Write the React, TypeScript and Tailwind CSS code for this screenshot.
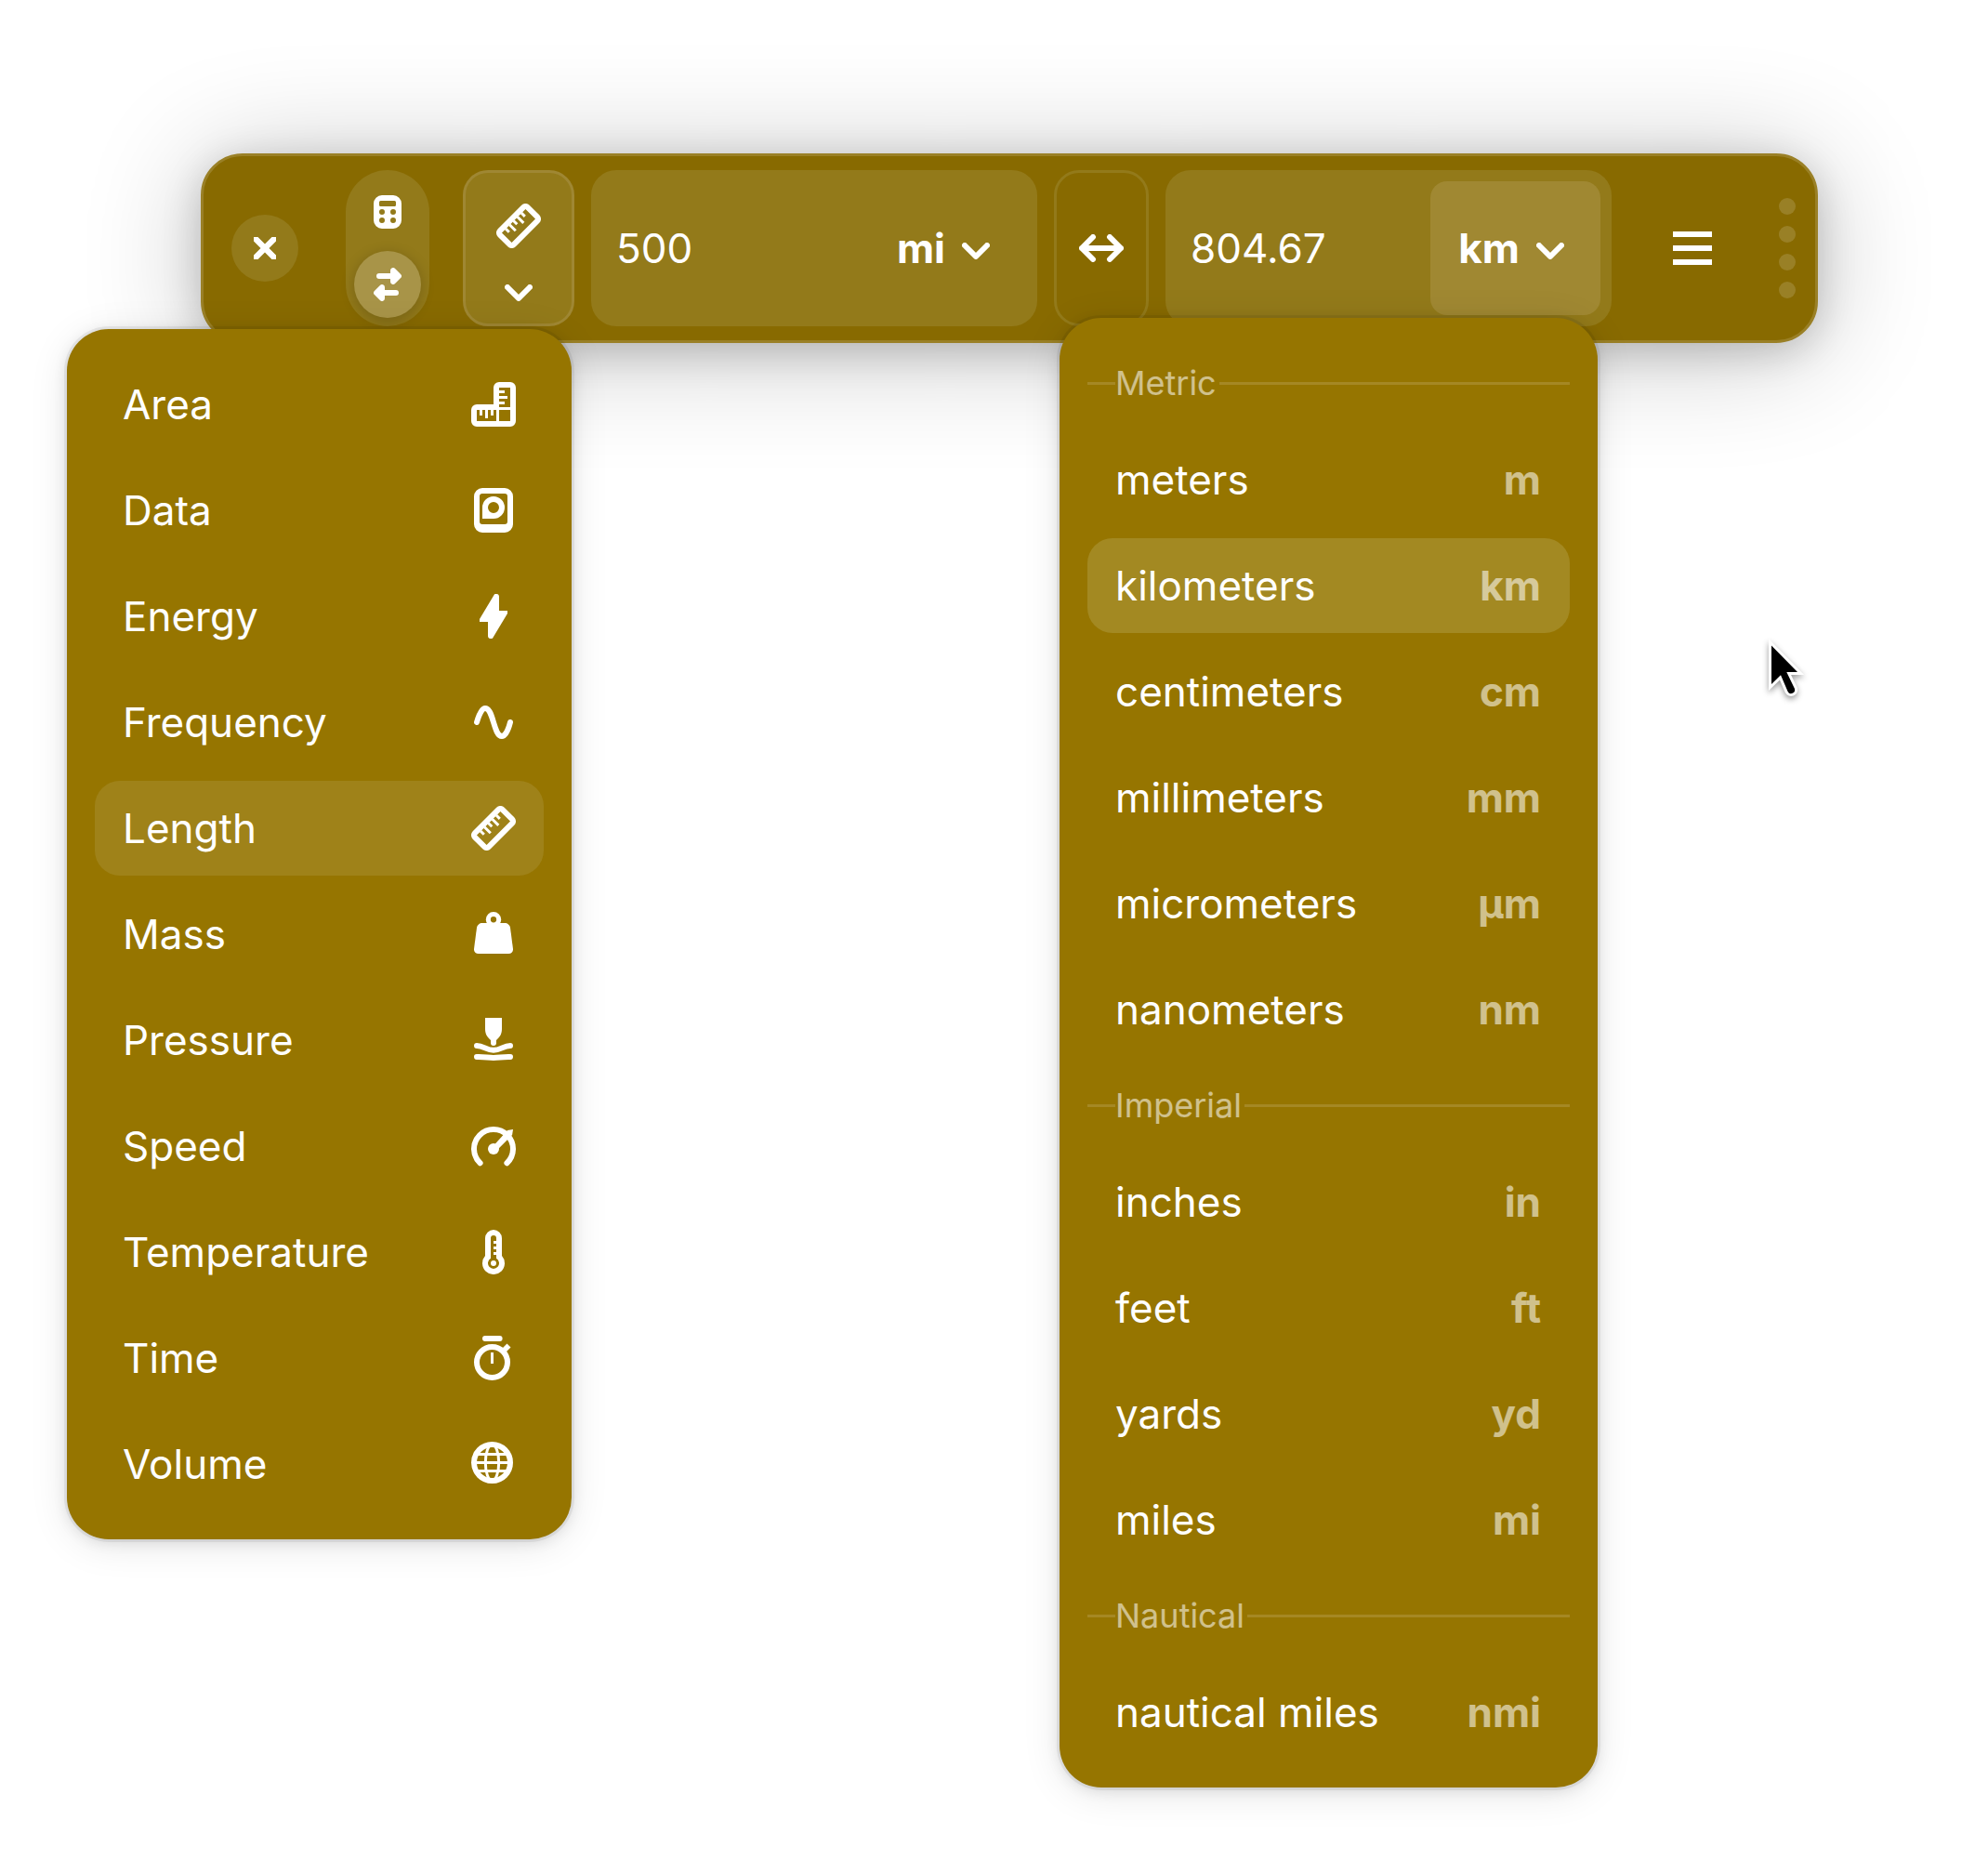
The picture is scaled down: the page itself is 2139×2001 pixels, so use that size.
import type { ReactNode } from 'react';

type IconProps = { children: ReactNode; w?: number; h?: number; className?: string };

function Icon({ children, w = 16, h = 16, className = 'h-12 w-12' }: IconProps) {
  return (
    <svg viewBox={`0 0 ${w} ${h}`} className={`shrink-0 ${className}`} fill="currentColor" aria-hidden="true">
      {children}
    </svg>
  );
}

const Ruler = () => (
  <Icon>
    <g transform="translate(8 8) rotate(-45)">
      <path fillRule="evenodd" d="M-6-4.5H6a2 2 0 0 1 2 2v5a2 2 0 0 1-2 2H-6a2 2 0 0 1-2-2v-5a2 2 0 0 1 2-2ZM-6-2.5v5H6v-5Z" />
      <path d="M-4.5-2.6h1v1.8h-1ZM-2.5-2.6h1v3.1h-1ZM-.5-2.6h1v1.8h-1ZM1.5-2.6h1v3.1h-1ZM3.5-2.6h1v1.8h-1Z" />
    </g>
  </Icon>
);

const Chevron = () => (
  <Icon w={10} h={6} className="h-[18px] w-[30px]">
    <path d="M1 1l4 4 4-4" fill="none" stroke="currentColor" strokeWidth="2" strokeLinecap="round" strokeLinejoin="round" />
  </Icon>
);

const Area = () => (
  <Icon>
    <path
      fillRule="evenodd"
      d="M10 0h4a2 2 0 0 1 2 2v12a2 2 0 0 1-2 2H2a2 2 0 0 1-2-2v-4a2 2 0 0 1 2-2h6V2a2 2 0 0 1 2-2ZM10 2v1h2v1h-2v1h3v1h-3v1h2v1h-2v1h4V2ZM2 10v4h7v-4H8v2H7v-2H6v3H5v-3H4v2H3v-2ZM10 10v4h4v-4Z"
    />
  </Icon>
);

const Data = () => (
  <Icon>
    <path
      fillRule="evenodd"
      d="M4 0h8a3 3 0 0 1 3 3v10a3 3 0 0 1-3 3H4a3 3 0 0 1-3-3V3a3 3 0 0 1 3-3ZM4 2a1 1 0 0 0-1 1v9a1 1 0 0 0 1 1h8a1 1 0 0 0 1-1V3a1 1 0 0 0-1-1Z"
    />
    <path fillRule="evenodd" d="M8 3a4 4 0 0 1 0 8H4V7a4 4 0 0 1 4-4ZM8 5a2 2 0 1 0 0 4 2 2 0 0 0 0-4Z" />
  </Icon>
);

const Energy = () => (
  <Icon>
    <path d="M8.1.5A1 1 0 0 1 10 1v5h3v1l-5.1 8.5A1 1 0 0 1 6 15v-5H3V9Z" />
  </Icon>
);

const Frequency = () => (
  <Icon>
    <path d="M2 8c1-3.4 2-5 3-5 3 0 3 10 6 10 1 0 2.100-1.500 3-5" fill="none" stroke="currentColor" strokeWidth="2" strokeLinecap="round" />
  </Icon>
);

const Mass = () => (
  <Icon>
    <circle cx="8" cy="2.750" r="1.900" fill="none" stroke="currentColor" strokeWidth="1.700" />
    <path d="M4 4h8c1 0 1.850.7 2 1.700l1 7.600c.1 1-.6 1.700-1.600 1.700H2.600c-1 0-1.700-.7-1.600-1.700l1-7.600C2.150 4.700 3 4 4 4Z" />
  </Icon>
);

const Pressure = () => (
  <Icon>
    <path d="M5 0h6v4c0 1.800-.8 3-2 4v1a1 1 0 0 1-2 0V8C5.800 7 5 5.800 5 4Z" />
    <path
      d="M2 10c2.400 0 3.500 1.600 6 1.600S11.600 10 14 10M2 14c2.500-.1 4 .3 6 .3s3.500-.4 6-.3"
      fill="none"
      stroke="currentColor"
      strokeWidth="2"
      strokeLinecap="round"
    />
  </Icon>
);

const Speed = () => (
  <Icon>
    <path d="M3.200 14.100A7 7 0 1 1 12.800 14.100" fill="none" stroke="currentColor" strokeWidth="2" strokeLinecap="round" />
    <circle cx="8" cy="9" r="2" />
    <path d="M15 2l-.3 2-5.500 5.500-1.400-1.400L13 2.300Z" />
  </Icon>
);

const Temperature = () => (
  <Icon>
    <path
      fillRule="evenodd"
      d="M8 0a3 3 0 0 1 3 3v6.360a4 4 0 1 1-6 0V3a3 3 0 0 1 3-3ZM8 2a1 1 0 0 0-1 1v7.270a2 2 0 1 0 2 0V9H8V8h1V7H8V6h1V5H8V4h1V3a1 1 0 0 0-1-1Z"
    />
    <circle cx="8" cy="12" r="1" />
  </Icon>
);

const Time = () => (
  <Icon>
    <rect x="4" width="7.200" height="2" rx="1" />
    <circle cx="7.500" cy="9.500" r="5.500" fill="none" stroke="currentColor" strokeWidth="2" />
    <path d="M7 6h1v4H7Z" />
    <path d="M11 6l2.500-2.500" stroke="currentColor" strokeWidth="1.900" />
  </Icon>
);

const Volume = () => (
  <Icon>
    <g fill="none" stroke="currentColor">
      <circle cx="7.500" cy="7.500" r="6.500" strokeWidth="2" />
      <ellipse cx="7.500" cy="7.500" rx="2.400" ry="6.500" />
      <path d="M2 4.500h11M1 7.500h13M2 10.500h11" />
    </g>
  </Icon>
);

const categories: { name: string; icon: ReactNode }[] = [
  { name: 'Area', icon: <Area /> },
  { name: 'Data', icon: <Data /> },
  { name: 'Energy', icon: <Energy /> },
  { name: 'Frequency', icon: <Frequency /> },
  { name: 'Length', icon: <Ruler /> },
  { name: 'Mass', icon: <Mass /> },
  { name: 'Pressure', icon: <Pressure /> },
  { name: 'Speed', icon: <Speed /> },
  { name: 'Temperature', icon: <Temperature /> },
  { name: 'Time', icon: <Time /> },
  { name: 'Volume', icon: <Volume /> },
];

const unitGroups: { title: string; units: [string, string][] }[] = [
  {
    title: 'Metric',
    units: [
      ['meters', 'm'],
      ['kilometers', 'km'],
      ['centimeters', 'cm'],
      ['millimeters', 'mm'],
      ['micrometers', 'µm'],
      ['nanometers', 'nm'],
    ],
  },
  {
    title: 'Imperial',
    units: [
      ['inches', 'in'],
      ['feet', 'ft'],
      ['yards', 'yd'],
      ['miles', 'mi'],
    ],
  },
  { title: 'Nautical', units: [['nautical miles', 'nmi']] },
];

const popup =
  'absolute flex flex-col gap-3 rounded-[45px] bg-[#967500] p-[30px] shadow-[0_0_0_3px_rgba(0,0,0,0.06),0_3px_15px_rgba(0,0,0,0.1),0_6px_42px_rgba(0,0,0,0.1)]';

function Field({ label, value, unit, open = false }: { label: string; value: string; unit: string; open?: boolean }) {
  return (
    <div className="flex min-w-0 flex-1 items-center rounded-[27px] bg-[#937a1a] p-3">
      <input aria-label={label} defaultValue={value} className="h-full min-w-0 flex-1 bg-transparent pl-[15px] outline-none" />
      <button
        aria-label={`${label} unit: ${unit}`}
        className={`flex h-full items-center gap-[18px] rounded-[18px] pr-[39px] pl-[30px] font-bold ${open ? 'bg-[#a08832]' : ''}`}
      >
        {unit}
        <span className="pt-[6px]">
          <Chevron />
        </span>
      </button>
    </div>
  );
}

function CategoryMenu() {
  return (
    <div role="menu" aria-label="Category" className={`${popup} top-[186px] -left-[147px] w-[543px]`}>
      {categories.map(({ name, icon }) => (
        <button
          key={name}
          role="menuitem"
          className={`flex h-[102px] items-center justify-between rounded-[27px] px-[30px] ${name === 'Length' ? 'bg-[#9f8219]' : ''}`}
        >
          {name}
          {icon}
        </button>
      ))}
    </div>
  );
}

function UnitMenu() {
  return (
    <div role="menu" aria-label="Unit" className={`${popup} top-[174px] right-[234px] w-[579px]`}>
      {unitGroups.map(({ title, units }) => (
        <div key={title} role="group" aria-label={title} className="flex flex-col gap-3">
          <div className="flex h-[81px] items-center text-[36px] leading-[43px] text-white/55">
            <span className="h-[3px] w-[30px] bg-white/14" />
            {title}
            <span className="ml-[3px] h-[3px] flex-1 bg-white/14" />
          </div>
          {units.map(([name, symbol]) => (
            <button
              key={name}
              role="menuitem"
              className={`flex h-[102px] items-center justify-between rounded-[27px] pr-[31px] pl-[30px] ${name === 'kilometers' ? 'bg-[#a38922]' : ''}`}
            >
              {name}
              <span className="font-bold text-white/55">{symbol}</span>
            </button>
          ))}
        </div>
      ))}
    </div>
  );
}

export default function App() {
  return (
    <main className="min-h-screen overflow-hidden bg-white pt-[165px] pr-[183px] pl-[216px] font-['Inter',sans-serif] text-[44px] leading-[54px] text-white">
      <div className="relative flex h-[204px] items-stretch rounded-[45px] border-[3px] border-[#9a8026] bg-[#886a00] py-[15px] pr-[21px] pl-[30px] shadow-[0_9px_42px_rgba(0,0,0,0.18),0_9px_126px_rgba(0,0,0,0.24)]">
        <button aria-label="Close" className="flex size-[72px] items-center justify-center self-center rounded-full bg-[#937a1a]">
          <Icon w={8} h={8} className="size-6">
            <path d="M0 0h1.500L4 2.500 6.500 0H8v1.500L5.500 4 8 6.500V8H6.500L4 5.500 1.500 8H0V6.500L2.500 4 0 1.500Z" />
          </Icon>
        </button>

        <div className="ml-[51px] flex w-[90px] flex-col items-center justify-between rounded-full bg-[#937a1a] py-[9px]">
          <button aria-label="Calculator" className="flex size-[72px] items-center justify-center rounded-full">
            <Icon w={10} h={12} className="h-9 w-[30px]">
              <path
                fillRule="evenodd"
                d="M3 0h4a3 3 0 0 1 3 3v6a3 3 0 0 1-3 3H3a3 3 0 0 1-3-3V3a3 3 0 0 1 3-3ZM2.500 2a.5.5 0 0 0-.5.5v1a.5.5 0 0 0 .5.5h5a.5.5 0 0 0 .5-.5v-1a.5.5 0 0 0-.5-.5ZM3 5a1 1 0 1 0 0 2 1 1 0 0 0 0-2ZM7 5a1 1 0 1 0 0 2 1 1 0 0 0 0-2ZM3 8a1 1 0 1 0 0 2 1 1 0 0 0 0-2ZM7 8a1 1 0 1 0 0 2 1 1 0 0 0 0-2Z"
              />
            </Icon>
          </button>
          <button
            aria-label="Converter"
            className="flex size-[72px] items-center justify-center rounded-full bg-[#a89448] shadow-[0_3px_15px_rgba(0,0,0,0.2)]"
          >
            <Icon w={10} h={12} className="h-9 w-[30px]">
              <path d="M2 2h4V1a1 1 0 0 1 1.700-.7l2 2a1 1 0 0 1 0 1.400l-2 2A1 1 0 0 1 6 5V4H2a1 1 0 0 1 0-2ZM8 8H4V7a1 1 0 0 0-1.700-.7l-2 2a1 1 0 0 0 0 1.400l2 2A1 1 0 0 0 4 11v-1h4a1 1 0 0 0 0-2Z" />
            </Icon>
          </button>
        </div>

        <button
          aria-label="Category: Length"
          className="ml-9 flex w-[120px] flex-col items-center gap-[39px] rounded-[27px] border-[3px] border-[#9f8733] bg-[#937a1a] pt-[33px]"
        >
          <Ruler />
          <Chevron />
        </button>

        <div className="ml-[18px] flex min-w-0 flex-1 gap-[18px]">
          <Field label="From" value="500" unit="mi" />
          <button
            aria-label="Swap units"
            className="flex w-[102px] items-center justify-center rounded-[27px] border-[3px] border-[#937a1a]"
          >
            <Icon w={16} h={10} className="h-[30px] w-12">
              <path
                d="M5 1L1 5l4 4M11 1l4 4-4 4M1 5h14"
                fill="none"
                stroke="currentColor"
                strokeWidth="2"
                strokeLinecap="round"
                strokeLinejoin="round"
              />
            </Icon>
          </button>
          <Field label="To" value="804.67" unit="km" open />
        </div>

        <button aria-label="Menu" className="ml-[66px] flex w-[42px] flex-col items-stretch justify-center gap-[9px]">
          <span className="h-[6px] bg-white" />
          <span className="h-[6px] bg-white" />
          <span className="h-[6px] bg-white" />
        </button>

        <div className="ml-[72px] flex flex-col items-center justify-center gap-3">
          <span className="size-[18px] rounded-full bg-white/15" />
          <span className="size-[18px] rounded-full bg-white/15" />
          <span className="size-[18px] rounded-full bg-white/15" />
          <span className="size-[18px] rounded-full bg-white/15" />
        </div>

        <CategoryMenu />
        <UnitMenu />
      </div>

      <svg
        viewBox="0 0 50 80"
        className="absolute top-[680px] left-[1895px] h-20 w-[50px] drop-shadow-[0_3px_3px_rgba(0,0,0,0.4)]"
        aria-hidden="true"
      >
        <path
          d="M11 14.500V56l10-9.700 7.600 17.600a4 4 0 0 0 7.400-2.900l-8.700-18H39Z"
          fill="#000"
          stroke="#fff"
          strokeWidth="6"
          strokeMiterlimit="6"
          paintOrder="stroke"
        />
      </svg>
    </main>
  );
}
